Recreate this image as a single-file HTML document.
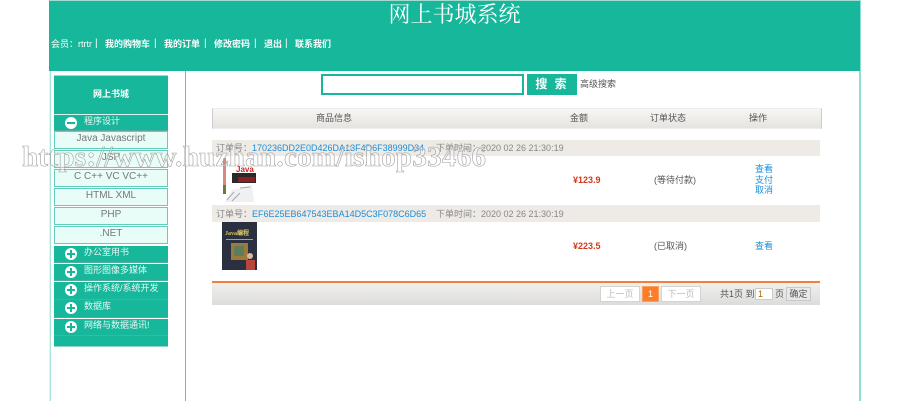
<!DOCTYPE html>
<html><head><meta charset="utf-8">
<style>
html,body{margin:0;padding:0;background:#fff;width:900px;height:401px;overflow:hidden;font-family:"Liberation Sans","Noto Sans CJK SC",sans-serif;}
div,span{position:absolute;white-space:nowrap;box-sizing:border-box;}
.w{color:#fff;font-size:10px;line-height:12px;font-weight:bold}
.mh{left:54px;width:114px;background:#17b79b;border-bottom:1px solid #5aa99a;color:#e6f7f3;font-size:9px;}
.mh span{left:30px;top:0;line-height:12px}
.ic{position:absolute;left:11px;top:2px;width:12px;height:12px;border-radius:50%;background:#fff;}
.ic:before{content:"";position:absolute;left:2px;top:5px;width:8px;height:2px;background:#17b79b}
.p:after{content:"";position:absolute;left:5px;top:2px;width:2px;height:8px;background:#17b79b}
.it{left:54px;width:114px;height:18px;background:#e9fdf8;border:1px solid #62cdb8;color:#777;font-size:10px;line-height:12px;padding-top:1px;text-align:center}
.g{color:#888;font-size:9px;line-height:12px}
.b{color:#1a8fd8;font-size:9px;line-height:12px}
.t{color:#555;font-size:9px;line-height:12px}
.pr{color:#d4381a;font-size:9px;line-height:12px;font-weight:bold}
.pg{top:286px;height:16px;border:1px solid #d3d3d3;background:#fff;color:#bbb;font-size:9px;line-height:14px;text-align:center}
</style></head><body>
<div style="left:49px;top:0;width:1px;height:401px;background:#e2f5f1"></div>
<div style="left:50px;top:0;width:1px;height:401px;background:#a8e4d8"></div>
<div style="left:859px;top:0;width:2px;height:401px;background:#8fe0d2"></div>
<div style="left:185px;top:71px;width:1px;height:330px;background:#62c4b2"></div>
<div style="left:49px;top:0;width:811px;height:71px;background:#17b79b;border-top:1px solid #9fdccf"></div>
<div style="left:49px;top:1px;width:811px;text-align:center;color:#fff;font-size:22px;line-height:27px;font-family:'Liberation Serif','Noto Serif CJK SC',serif">网上书城系统</div>
<div class="w" style="left:51px;top:38px;font-weight:normal;font-size:9px">会员：rtrtr</div>
<div class="w" style="left:95px;top:38px;font-weight:normal">|</div>
<div class="w" style="left:105px;top:38px;font-size:9px">我的购物车</div>
<div class="w" style="left:154px;top:38px;font-weight:normal">|</div>
<div class="w" style="left:164px;top:38px;font-size:9px">我的订单</div>
<div class="w" style="left:204px;top:38px;font-weight:normal">|</div>
<div class="w" style="left:214px;top:38px;font-size:9px">修改密码</div>
<div class="w" style="left:254px;top:38px;font-weight:normal">|</div>
<div class="w" style="left:264px;top:38px;font-size:9px">退出</div>
<div class="w" style="left:285px;top:38px;font-weight:normal">|</div>
<div class="w" style="left:295px;top:38px;font-size:9px">联系我们</div>

<div style="left:54px;top:75px;width:114px;height:39px;background:#17b79b;border-top:1px solid #9fdccf;color:#fff;font-size:9px;font-weight:bold;text-align:center;line-height:37px">网上书城</div>
<div class="mh" style="top:114px;height:17px;border-top:1px solid #d5f2ec"><i class="ic" style="top:2px"></i><span>程序设计</span></div>
<div class="it" style="top:131px">Java Javascript</div>
<div class="it" style="top:150px">JSP</div>
<div class="it" style="top:169px">C C++ VC VC++</div>
<div class="it" style="top:188px">HTML XML</div>
<div class="it" style="top:207px">PHP</div>
<div class="it" style="top:226px">.NET</div>
<div class="mh" style="top:246px;height:17px"><i class="ic p"></i><span>办公室用书</span></div>
<div class="mh" style="top:264px;height:17px"><i class="ic p"></i><span>图形图像多媒体</span></div>
<div class="mh" style="top:282px;height:18px"><i class="ic p"></i><span>操作系统/系统开发</span></div>
<div class="mh" style="top:300px;height:18px"><i class="ic p"></i><span>数据库</span></div>
<div class="mh" style="top:319px;height:17px"><i class="ic p"></i><span>网络与数据通讯!</span></div>
<div style="left:54px;top:336px;width:114px;height:11px;background:#17b79b;border-bottom:1px solid #8fd8c9"></div>

<div style="left:321px;top:74px;width:203px;height:21px;border:2px solid #17b79b;background:#fff"></div>
<div style="left:527px;top:74px;width:50px;height:21px;background:#17b79b;color:#fff;font-size:12px;line-height:21px;text-align:center;font-weight:bold;letter-spacing:2px">搜 索</div>
<div class="t" style="left:580px;top:78px">高级搜索</div>

<div style="left:212px;top:108px;width:610px;height:21px;background:linear-gradient(#f8f7f5,#e6e4e0);border:1px solid #eeedeb;border-left-color:#ccc;border-right-color:#ccc"></div>
<div class="t" style="left:316px;top:112px">商品信息</div>
<div class="t" style="left:570px;top:112px">金额</div>
<div class="t" style="left:650px;top:112px">订单状态</div>
<div class="t" style="left:749px;top:112px">操作</div>

<div style="left:212px;top:140px;width:608px;height:16px;background:#eeeae6"></div>
<div class="g" style="left:216px;top:142px">订单号：</div>
<div class="b" style="left:252px;top:142px">170236DD2E0D426DA13F4D6F38999D34</div>
<div class="g" style="left:436px;top:142px">下单时间：2020 02 26 21:30:19</div>
<div class="pr" style="left:573px;top:174px">¥123.9</div>
<div class="t" style="left:654px;top:174px">(等待付款)</div>
<div class="b" style="left:755px;top:163px">查看</div>
<div class="b" style="left:755px;top:174px">支付</div>
<div class="b" style="left:755px;top:184px">取消</div>

<svg style="position:absolute;left:222px;top:158px" width="36" height="46" viewBox="0 0 36 46">
<rect width="36" height="46" fill="#fff"/>
<rect x="1" y="0" width="3" height="28" fill="#d98a80"/>
<rect x="1" y="27" width="3" height="9" fill="#6b7a3a"/>
<rect x="10" y="15" width="24" height="10" fill="#2a2a2a"/>
<rect x="16" y="19" width="17" height="5" fill="#8a2222"/>
<text x="14" y="14" font-size="8" font-weight="bold" fill="#d42020" font-family="Liberation Sans">Java</text>
<path d="M3 44L10 32L30 27L32 44Z" fill="#eef0f2"/>
<path d="M5 42L12 34M10 43L18 35M18 30L28 29" stroke="#aaa" stroke-width="1"/>
</svg>
<div style="left:212px;top:205px;width:608px;height:17px;background:#eeeae6"></div>
<div class="g" style="left:216px;top:208px">订单号：</div>
<div class="b" style="left:252px;top:208px">EF6E25EB647543EBA14D5C3F078C6D65</div>
<div class="g" style="left:436px;top:208px">下单时间：2020 02 26 21:30:19</div>
<svg style="position:absolute;left:222px;top:222px" width="35" height="48" viewBox="0 0 35 48">
<rect width="35" height="48" fill="#2a3040"/>
<text x="3" y="13" font-size="6" font-weight="bold" fill="#d9c86a" font-family="Liberation Serif">Java编程</text>
<rect x="4" y="17" width="27" height="1" fill="#b5a850"/>
<rect x="9" y="21" width="17" height="17" fill="#9a7b3c"/>
<rect x="12" y="24" width="10" height="10" fill="#5f7d5a"/>
<rect x="24" y="38" width="9" height="10" fill="#b8453c"/>
<circle cx="28" cy="34" r="3" fill="#d8b9a0"/>
</svg>
<div class="pr" style="left:573px;top:240px">¥223.5</div>
<div class="t" style="left:654px;top:240px">(已取消)</div>
<div class="b" style="left:755px;top:240px">查看</div>

<div style="left:212px;top:281px;width:608px;height:24px;background:linear-gradient(#f1f0ef,#dcdcdb);border-top:2px solid #f08040"></div>
<div class="pg" style="left:600px;width:40px">上一页</div>
<div class="pg" style="left:642px;width:17px;background:#fd7e26;border-color:#f5a060;color:#fff">1</div>
<div class="pg" style="left:661px;width:40px">下一页</div>
<div class="t" style="left:720px;top:288px">共1页 到</div>
<div style="left:755px;top:288px;width:18px;height:12px;background:#fff;border:1px solid #ccc;font-size:9px;line-height:10px;color:#a60;padding-left:2px">1</div>
<div class="t" style="left:775px;top:288px">页</div>
<div style="left:786px;top:287px;width:25px;height:14px;background:#e8e8e8;border:1px solid #c8c8c8;font-size:9px;line-height:12px;color:#555;text-align:center">确定</div>

<div style="left:22px;top:140px;font-family:'Liberation Serif',serif;font-size:29px;font-weight:bold;line-height:34px;letter-spacing:.3px;color:rgba(255,255,255,.35);-webkit-text-stroke:.6px #a0a0a0">https://www.huzhan.com/ishop33466</div>
</body></html>
